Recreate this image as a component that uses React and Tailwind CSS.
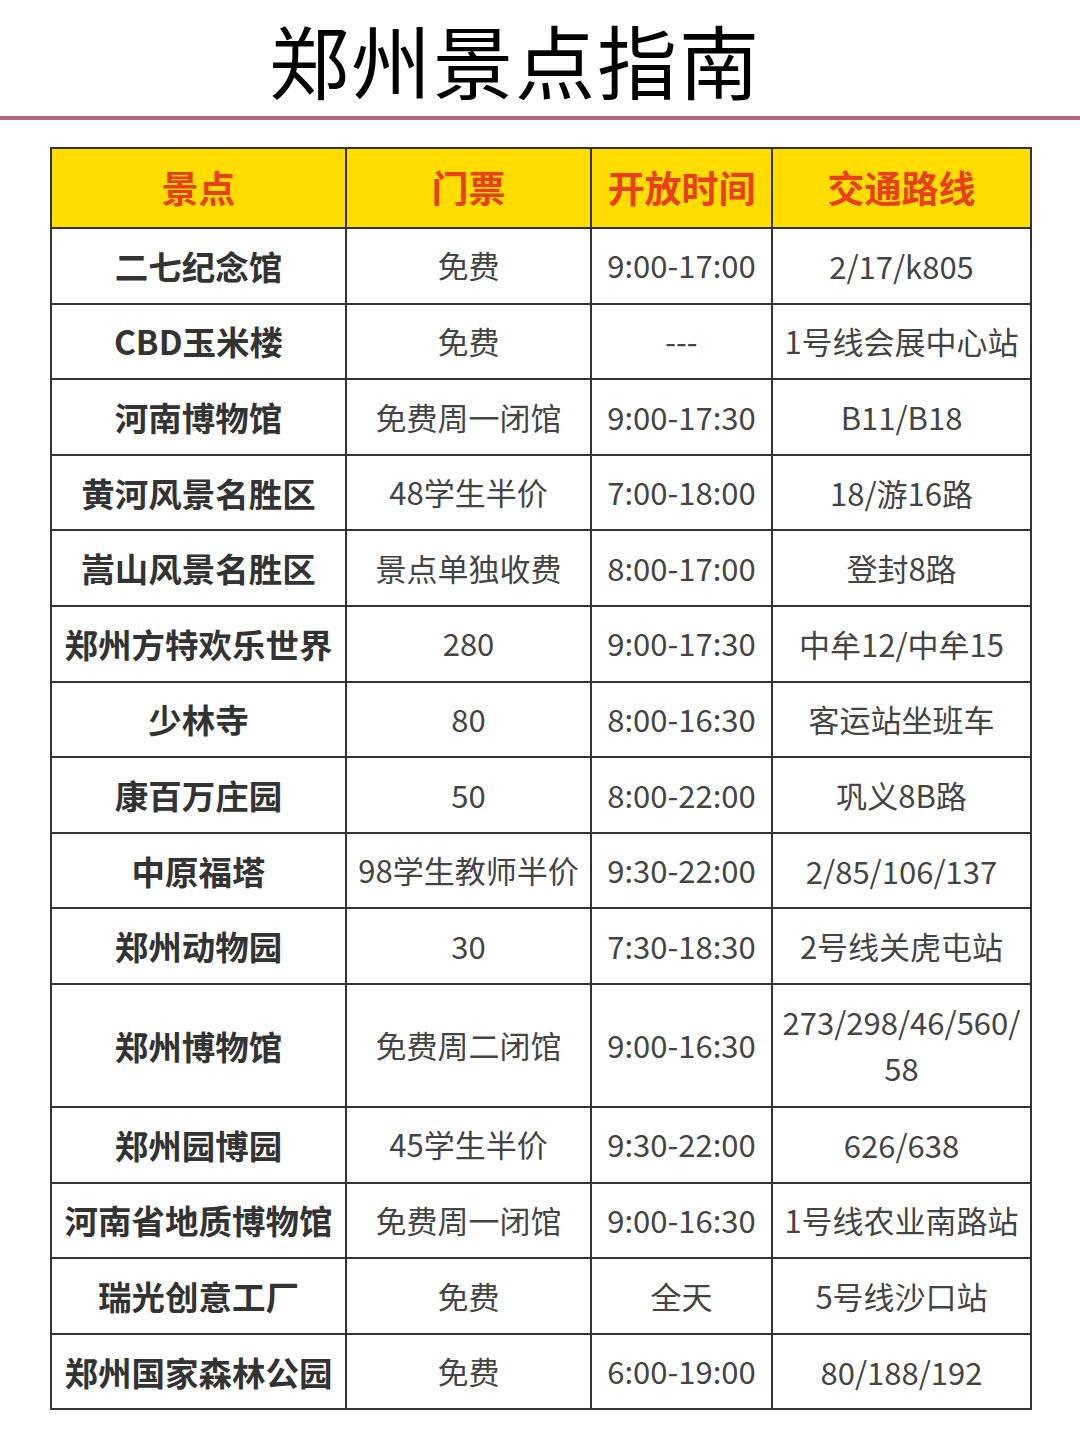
const rows = [
  ['二七纪念馆', '免费', '9:00-17:00', '2/17/k805'],
  ['CBD玉米楼', '免费', '---', '1号线会展中心站'],
  ['河南博物馆', '免费周一闭馆', '9:00-17:30', 'B11/B18'],
  ['黄河风景名胜区', '48学生半价', '7:00-18:00', '18/游16路'],
  ['嵩山风景名胜区', '景点单独收费', '8:00-17:00', '登封8路'],
  ['郑州方特欢乐世界', '280', '9:00-17:30', '中牟12/中牟15'],
  ['少林寺', '80', '8:00-16:30', '客运站坐班车'],
  ['康百万庄园', '50', '8:00-22:00', '巩义8B路'],
  ['中原福塔', '98学生教师半价', '9:30-22:00', '2/85/106/137'],
  ['郑州动物园', '30', '7:30-18:30', '2号线关虎屯站'],
  ['郑州博物馆', '免费周二闭馆', '9:00-16:30', '273/298/46/560/\n58'],
  ['郑州园博园', '45学生半价', '9:30-22:00', '626/638'],
  ['河南省地质博物馆', '免费周一闭馆', '9:00-16:30', '1号线农业南路站'],
  ['瑞光创意工厂', '免费', '全天', '5号线沙口站'],
  ['郑州国家森林公园', '免费', '6:00-19:00', '80/188/192'],
];

const headers = ['景点', '门票', '开放时间', '交通路线'];

export default function App() {
  return (
    <div className="w-[1080px] h-[1440px] bg-white font-['Noto_Sans_CJK_SC','Noto_Sans',sans-serif]">
      {/* title */}
      <div className="h-[116px] flex items-center justify-center pr-[50px]">
        <h1 className="text-[80px] leading-none text-black tracking-[2px]">郑州景点指南</h1>
      </div>
      <div className="h-[4px] bg-[#b2647e]" />

      <div className="pt-[27px] px-[50px]">
        <table className="w-[980px] border-collapse table-fixed border-2 border-[#333]">
          <colgroup>
            <col className="w-[295px]" />
            <col className="w-[245px]" />
            <col className="w-[181px]" />
            <col className="w-[259px]" />
          </colgroup>
          <thead>
            <tr className="h-[80px] bg-[#ffdd00]">
              {headers.map((h) => (
                <th key={h} className="border-2 border-[#333] text-[37px] font-semibold text-[#e8401c] text-center">
                  {h}
                </th>
              ))}
            </tr>
          </thead>
          <tbody>
            {rows.map((r, i) => (
              <tr key={i} className={r[3].includes('\n') ? 'h-[123px]' : 'h-[75.6px]'}>
                <td className="border-2 border-[#333] text-center text-[33.5px] font-semibold text-[#333] leading-tight whitespace-nowrap">
                  {r[0]}
                </td>
                <td className="border-2 border-[#333] text-center text-[31px] text-[#444] leading-tight whitespace-nowrap">
                  {r[1]}
                </td>
                <td className="border-2 border-[#333] text-center text-[31px] text-[#444] leading-tight whitespace-nowrap">
                  {r[2]}
                </td>
                <td className="border-2 border-[#333] text-center text-[31px] text-[#444] leading-[46px] whitespace-pre-line">
                  {r[3]}
                </td>
              </tr>
            ))}
          </tbody>
        </table>
      </div>
    </div>
  );
}
